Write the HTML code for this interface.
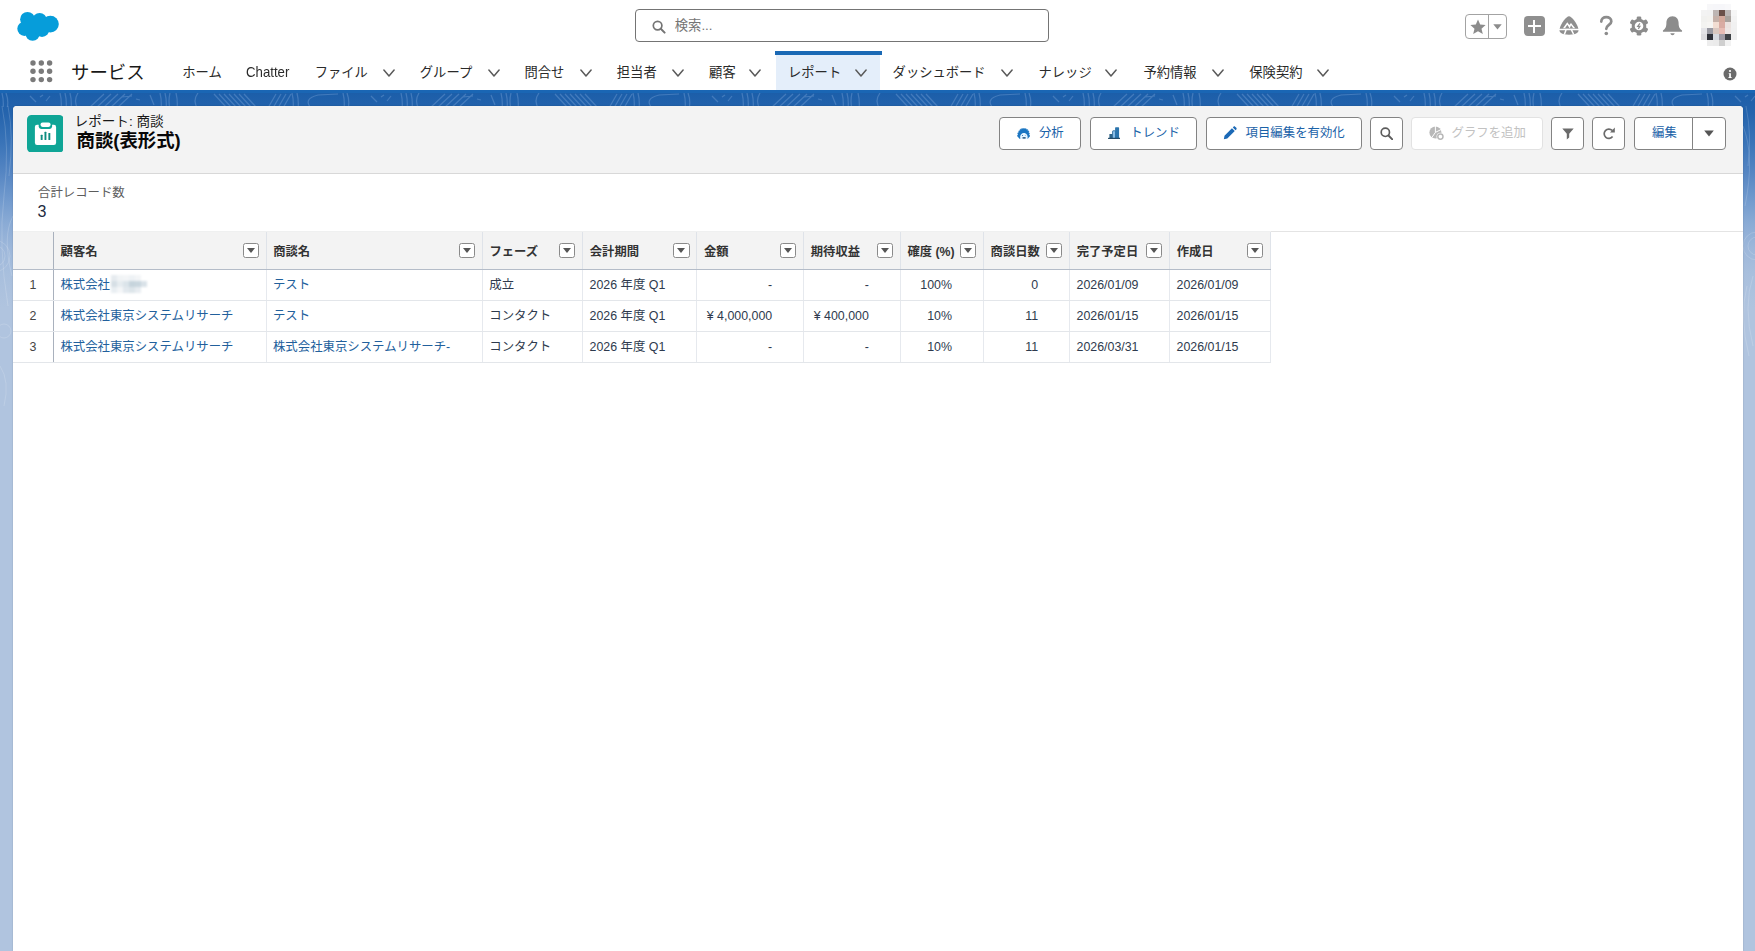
<!DOCTYPE html>
<html lang="ja">
<head>
<meta charset="utf-8">
<title>商談(表形式) | Salesforce</title>
<style>
*{box-sizing:border-box;margin:0;padding:0}
html,body{width:1755px;height:951px;overflow:hidden}
body{font-family:"Liberation Sans","Noto Sans CJK JP",sans-serif;color:#181818;background:#b0c4df;position:relative;font-size:13px}
.abs{position:absolute}
svg{display:block}
/* ---------- global header ---------- */
#ghead{position:absolute;left:0;top:0;width:1755px;height:90px;background:#fff}
#brandline{position:absolute;left:0;top:90px;width:1755px;height:3px;background:#1a66b4}
#bg{position:absolute;left:0;top:93px;width:1755px;height:300px;background:linear-gradient(to bottom,#1c5ea9 0px,#2564ad 20px,#3a74b8 50px,#5686c3 80px,#7099cd 105px,#8aabd5 130px,#9db7da 155px,#a8bfdd 180px,#b0c4df 215px)}
#search{position:absolute;left:635px;top:9px;width:414px;height:33px;border:1px solid #747474;border-radius:4px;background:#fff}
#search .ph{position:absolute;left:38.800px;top:8.2px;font-size:13.3px;color:#747474;line-height:16px}
.appname{position:absolute;left:71px;top:60px;font-size:18.4px;line-height:26px;color:#181818;white-space:nowrap}
.nav{position:absolute;top:54.6px;height:36px;font-size:13.3px;line-height:36px;color:#2a2a2a;white-space:nowrap}
.nav .chev{position:absolute;top:14px}
#active{position:absolute;left:776px;top:54px;width:104px;height:36px;background:#e4eefa}
#activebar{position:absolute;left:775px;top:51.3px;width:107px;height:3.5px;background:#1a69b5}
/* ---------- card ---------- */
#card{position:absolute;left:13px;top:106px;width:1730px;height:845px;background:#fff;border-radius:4px 4px 0 0;box-shadow:0 0 1.5px rgba(0,0,0,.25)}
#phead{position:absolute;left:0;top:0;width:1730px;height:68px;background:#f3f3f3;border-bottom:1px solid #d8d8d8;border-radius:4px 4px 0 0}
.btn{position:absolute;top:11px;height:32.5px;border:1px solid #838383;border-radius:4px;background:#fff;color:#1a62a8;font-size:12.4px;line-height:30px;white-space:nowrap}
.btn.dis{border-color:#e2e2e2;color:#c2c2c2}
.btn span{position:absolute;top:0}
/* ---------- table ---------- */
#thead{position:absolute;left:0;top:126px;width:1257.9px;height:38px;background:#f3f3f3;border-bottom:1px solid #b4bcc8;box-shadow:0 -1px 0 #eff0f0}
.th{position:absolute;top:0;height:37px;border-left:1px solid #dfe3e9;font-size:12.3px;font-weight:bold;line-height:41.2px;color:#333;white-space:nowrap;padding-left:6.6px}
.dd{position:absolute;top:10.7px;width:16.3px;height:15.6px;border:1px solid #8a8a8a;border-radius:2.5px;background:#fff}
.dd:after{content:"";position:absolute;left:3.1px;top:4.3px;border-left:4px solid transparent;border-right:4px solid transparent;border-top:5.5px solid #555}
.row{position:absolute;left:0;width:1257.9px;height:31px;border-bottom:1px solid #e3e6ea}
.td{position:absolute;top:0;height:30px;border-left:1px solid #e6e9ee;font-size:12.4px;line-height:30px;color:#2e3a4d;white-space:nowrap;padding:0 6.4px}
.td.r{text-align:right;padding-right:31px}
.td.lk{color:#22609c}
.td.n{border-left:none;text-align:center;color:#444;padding:0}
.blurname{display:inline-block;position:relative;vertical-align:top;width:36px;height:18px;margin-left:1.5px;margin-top:4.5px;filter:blur(0.8px)}
.blurname i{position:absolute;width:6px;height:6px}
</style>
</head>
<body>
<div id="ghead">
<svg class="abs" style="left:15px;top:10px" width="46" height="32" viewBox="15 10 46 32"><g fill="#069dda"><circle cx="27.5" cy="19.3" r="7.4"/><circle cx="39.6" cy="20.2" r="7.2"/><circle cx="50.4" cy="24.1" r="8.4"/><circle cx="24.4" cy="28.8" r="7.1"/><circle cx="32.6" cy="33.6" r="7.2"/><circle cx="42" cy="29.6" r="7.4"/><rect x="24" y="18" width="26" height="14"/></g></svg>
<div id="search"><svg class="abs" style="left:16.400px;top:10.200px" width="14" height="14" viewBox="0 0 14 14"><circle cx="5.6" cy="5.6" r="4.3" fill="none" stroke="#747474" stroke-width="1.7"/><path d="M8.8 8.8 L12.6 12.6" stroke="#747474" stroke-width="2" stroke-linecap="round"/></svg><div class="ph">検索...</div></div>
<!-- favorites -->
<div class="abs" style="left:1465px;top:14px;width:42px;height:24.5px;border:1px solid #a3a3a3;border-radius:4px"></div>
<div class="abs" style="left:1488px;top:14px;width:1px;height:24.5px;background:#a3a3a3"></div>
<svg class="abs" style="left:1469.5px;top:18.5px" width="16" height="16" viewBox="0 0 16 16"><path d="M8 0.6 L10.2 5.6 L15.6 6.1 L11.5 9.7 L12.8 15 L8 12.2 L3.2 15 L4.5 9.7 L0.4 6.1 L5.8 5.6 Z" fill="#8c8c8c"/></svg>
<svg class="abs" style="left:1492.6px;top:24px" width="9" height="6" viewBox="0 0 9 6"><path d="M0.3 0.3 H8.7 L4.5 5.6 Z" fill="#8c8c8c"/></svg>
<!-- plus -->
<div class="abs" style="left:1523.5px;top:16px;width:21px;height:20px;border-radius:4px;background:#8f8f8f"></div>
<div class="abs" style="left:1527.5px;top:25px;width:13px;height:2px;background:#fff"></div>
<div class="abs" style="left:1533px;top:19.5px;width:2px;height:13px;background:#fff"></div>
<!-- trailhead-like -->
<svg class="abs" style="left:1558px;top:15px" width="22" height="21" viewBox="0 0 22 21"><path d="M11 1.200 C13.500 1.200 19.300 8 20.500 14.300 C21 17 19 19.800 11 19.800 C3 19.800 1 17 1.500 14.300 C2.700 8 8.500 1.200 11 1.200 Z" fill="#8f8f8f"/><path d="M5 13.300 L9.300 7.200 L11.300 10 L13 8 L17.200 13.300 Z" fill="#fff"/><path d="M9.300 9.800 L11.600 13.300 H7 Z M13 10.200 L15.200 13.300 H11.900 Z" fill="#8f8f8f"/><path d="M1 14.400 H21 M8.200 14.400 L6.300 19.500 M13.200 14.400 L15.700 19.500" fill="none" stroke="#fff" stroke-width="1.500"/></svg>
<!-- help -->
<svg class="abs" style="left:1599px;top:15px" width="15" height="21" viewBox="0 0 15 21"><path d="M2.300 6.600 C2.300 3.700 4.500 2.200 7.300 2.200 C10.200 2.200 12.300 3.900 12.300 6.400 C12.300 9.800 7.300 9.900 7.300 13.800" fill="none" stroke="#8c8c8c" stroke-width="2.700" stroke-linecap="round"/><circle cx="7.300" cy="18.500" r="1.800" fill="#8c8c8c"/></svg>
<!-- gear -->
<svg class="abs" style="left:1629px;top:15.500px" width="20" height="20" viewBox="-10 -10 20 20"><g fill="#8c8c8c"><circle r="7.300"/><g id="tth"><rect x="-2.300" y="-9.600" width="4.600" height="4.500" rx="1.300"/></g><use href="#tth" transform="rotate(60)"/><use href="#tth" transform="rotate(120)"/><use href="#tth" transform="rotate(180)"/><use href="#tth" transform="rotate(240)"/><use href="#tth" transform="rotate(300)"/></g><circle r="4.300" fill="#fff"/><path d="M0.900 -2.600 L-1.300 0.400 H0.900 L-0.700 2.800" stroke="#8c8c8c" stroke-width="1.200" fill="none"/></svg>
<!-- bell -->
<svg class="abs" style="left:1662px;top:15px" width="21" height="21" viewBox="0 0 21 21"><path d="M10.5 1.200 C14.5 1.200 16.6 4.200 16.6 8 C16.6 12.5 18 14 19.8 15.2 C20.4 15.600 20.2 16.800 19.300 16.800 H1.700 C0.800 16.800 0.600 15.600 1.200 15.200 C3 14 4.400 12.500 4.400 8 C4.400 4.200 6.500 1.200 10.500 1.200 Z" fill="#8c8c8c"/><path d="M8.300 18.300 H12.700 C12.400 19.500 11.600 20.200 10.500 20.200 C9.400 20.200 8.600 19.500 8.300 18.300 Z" fill="#8c8c8c"/></svg>
<!-- avatar (pixelated) -->
<div class="abs" style="left:1701px;top:4px;width:36px;height:42px;filter:blur(0.5px)">
<div class="abs" style="left:6px;top:0px;width:6px;height:6px;background:#f7f7f9"></div><div class="abs" style="left:12px;top:0px;width:6px;height:6px;background:#f6f6f9"></div><div class="abs" style="left:18px;top:0px;width:6px;height:6px;background:#f6f6f9"></div><div class="abs" style="left:24px;top:0px;width:6px;height:6px;background:#f8f8fa"></div>
<div class="abs" style="left:0px;top:6px;width:6px;height:6px;background:#f3f3f3"></div><div class="abs" style="left:6px;top:6px;width:6px;height:6px;background:#f2f2f2"></div><div class="abs" style="left:12px;top:6px;width:6px;height:6px;background:#bdb5b3"></div><div class="abs" style="left:18px;top:6px;width:6px;height:6px;background:#6a5049"></div><div class="abs" style="left:24px;top:6px;width:6px;height:6px;background:#bbb6b5"></div><div class="abs" style="left:30px;top:6px;width:6px;height:6px;background:#f6f6f6"></div>
<div class="abs" style="left:0px;top:12px;width:6px;height:6px;background:#f1f1ef"></div><div class="abs" style="left:6px;top:12px;width:6px;height:6px;background:#f3f2ef"></div><div class="abs" style="left:12px;top:12px;width:6px;height:6px;background:#c5b1a9"></div><div class="abs" style="left:18px;top:12px;width:6px;height:6px;background:#d4a99c"></div><div class="abs" style="left:24px;top:12px;width:6px;height:6px;background:#a9a39e"></div><div class="abs" style="left:30px;top:12px;width:6px;height:6px;background:#f3f3f3"></div>
<div class="abs" style="left:0px;top:18px;width:6px;height:6px;background:#f3f3f1"></div><div class="abs" style="left:6px;top:18px;width:6px;height:6px;background:#f6f5f3"></div><div class="abs" style="left:12px;top:18px;width:6px;height:6px;background:#f2ddd2"></div><div class="abs" style="left:18px;top:18px;width:6px;height:6px;background:#d9aca3"></div><div class="abs" style="left:24px;top:18px;width:6px;height:6px;background:#ebe2df"></div><div class="abs" style="left:30px;top:18px;width:6px;height:6px;background:#f1f1f1"></div>
<div class="abs" style="left:0px;top:24px;width:6px;height:6px;background:#e4e4e8"></div><div class="abs" style="left:6px;top:24px;width:6px;height:6px;background:#9a9aa3"></div><div class="abs" style="left:12px;top:24px;width:6px;height:6px;background:#d9c8c1"></div><div class="abs" style="left:18px;top:24px;width:6px;height:6px;background:#e8bdb5"></div><div class="abs" style="left:24px;top:24px;width:6px;height:6px;background:#ece5e3"></div><div class="abs" style="left:30px;top:24px;width:6px;height:6px;background:#f0f0f0"></div>
<div class="abs" style="left:0px;top:30px;width:6px;height:6px;background:#dcdce0"></div><div class="abs" style="left:6px;top:30px;width:6px;height:6px;background:#2e3039"></div><div class="abs" style="left:12px;top:30px;width:6px;height:6px;background:#d6d9e0"></div><div class="abs" style="left:18px;top:30px;width:6px;height:6px;background:#a09ca5"></div><div class="abs" style="left:24px;top:30px;width:6px;height:6px;background:#3e4246"></div><div class="abs" style="left:30px;top:30px;width:6px;height:6px;background:#efefef"></div>
<div class="abs" style="left:6px;top:36px;width:6px;height:6px;background:#ededed"></div><div class="abs" style="left:12px;top:36px;width:6px;height:6px;background:#ebebeb"></div><div class="abs" style="left:18px;top:36px;width:6px;height:6px;background:#cfcfcf"></div><div class="abs" style="left:24px;top:36px;width:6px;height:6px;background:#f2f2f2"></div>
</div>
<!-- info -->
<svg class="abs" style="left:1723px;top:66.5px" width="14" height="14" viewBox="0 0 14 14"><circle cx="7" cy="7" r="6.500" fill="#6b6b6b"/><circle cx="7" cy="4" r="1.100" fill="#fff"/><path d="M5.700 6.200 H7.900 V10 H8.600 V10.900 H5.500 V10 H6.200 V7.100 H5.700 Z" fill="#fff"/></svg>
<!-- waffle -->
<svg class="abs" style="left:30px;top:59.500px" width="23" height="23" viewBox="0 0 23 23"><g fill="#7a7a7a"><circle cx="3" cy="3" r="2.700"/><circle cx="11.300" cy="3" r="2.700"/><circle cx="19.600" cy="3" r="2.700"/><circle cx="3" cy="11.300" r="2.700"/><circle cx="11.300" cy="11.300" r="2.700"/><circle cx="19.600" cy="11.300" r="2.700"/><circle cx="3" cy="19.600" r="2.700"/><circle cx="11.300" cy="19.600" r="2.700"/><circle cx="19.600" cy="19.600" r="2.700"/></g></svg>
<div class="appname">サービス</div>
<div id="active"></div><div id="activebar"></div>
<div class="nav" style="left:182.3px">ホーム</div>
<div class="nav" style="left:246.3px;font-size:14.3px;top:53.8px;transform:scaleX(.925);transform-origin:left center">Chatter</div>
<div class="nav" style="left:314.7px">ファイル</div>
<svg class="abs" style="left:383px;top:69px" width="12" height="8" viewBox="0 0 12 8"><path d="M0.9 1 L6 7 L11.1 1" fill="none" stroke="#5a5a5a" stroke-width="1.5" stroke-linecap="round" stroke-linejoin="round"/></svg>
<div class="nav" style="left:419.8px">グループ</div>
<svg class="abs" style="left:488px;top:69px" width="12" height="8" viewBox="0 0 12 8"><path d="M0.9 1 L6 7 L11.1 1" fill="none" stroke="#5a5a5a" stroke-width="1.5" stroke-linecap="round" stroke-linejoin="round"/></svg>
<div class="nav" style="left:524.4px">問合せ</div>
<svg class="abs" style="left:579.7px;top:69px" width="12" height="8" viewBox="0 0 12 8"><path d="M0.9 1 L6 7 L11.1 1" fill="none" stroke="#5a5a5a" stroke-width="1.5" stroke-linecap="round" stroke-linejoin="round"/></svg>
<div class="nav" style="left:616.8px">担当者</div>
<svg class="abs" style="left:671.7px;top:69px" width="12" height="8" viewBox="0 0 12 8"><path d="M0.9 1 L6 7 L11.1 1" fill="none" stroke="#5a5a5a" stroke-width="1.5" stroke-linecap="round" stroke-linejoin="round"/></svg>
<div class="nav" style="left:709.1px">顧客</div>
<svg class="abs" style="left:749.4px;top:69px" width="12" height="8" viewBox="0 0 12 8"><path d="M0.9 1 L6 7 L11.1 1" fill="none" stroke="#5a5a5a" stroke-width="1.5" stroke-linecap="round" stroke-linejoin="round"/></svg>
<div class="nav" style="left:788px">レポート</div>
<svg class="abs" style="left:854.7px;top:69px" width="12" height="8" viewBox="0 0 12 8"><path d="M0.9 1 L6 7 L11.1 1" fill="none" stroke="#5a5a5a" stroke-width="1.5" stroke-linecap="round" stroke-linejoin="round"/></svg>
<div class="nav" style="left:892.6px">ダッシュボード</div>
<svg class="abs" style="left:1001px;top:69px" width="12" height="8" viewBox="0 0 12 8"><path d="M0.9 1 L6 7 L11.1 1" fill="none" stroke="#5a5a5a" stroke-width="1.5" stroke-linecap="round" stroke-linejoin="round"/></svg>
<div class="nav" style="left:1038.5px">ナレッジ</div>
<svg class="abs" style="left:1105px;top:69px" width="12" height="8" viewBox="0 0 12 8"><path d="M0.9 1 L6 7 L11.1 1" fill="none" stroke="#5a5a5a" stroke-width="1.5" stroke-linecap="round" stroke-linejoin="round"/></svg>
<div class="nav" style="left:1143.4px">予約情報</div>
<svg class="abs" style="left:1211.5px;top:69px" width="12" height="8" viewBox="0 0 12 8"><path d="M0.9 1 L6 7 L11.1 1" fill="none" stroke="#5a5a5a" stroke-width="1.5" stroke-linecap="round" stroke-linejoin="round"/></svg>
<div class="nav" style="left:1249.3px">保険契約</div>
<svg class="abs" style="left:1317px;top:69px" width="12" height="8" viewBox="0 0 12 8"><path d="M0.9 1 L6 7 L11.1 1" fill="none" stroke="#5a5a5a" stroke-width="1.5" stroke-linecap="round" stroke-linejoin="round"/></svg>
</div>
<div id="brandline"></div>
<div id="bg"></div>
<svg class="abs" style="left:0;top:93px" width="1755" height="16" viewBox="0 0 1755 16"><defs><pattern id="swirl" width="341" height="16" patternUnits="userSpaceOnUse"><path d="M2 0 Q4 8 3 16 M6 0 Q9 8 7 16 M30 3 L36 9 M40 4 L43 2 M46 8 L50 3 M60 0 Q62 8 61 16 M65 0 Q67 8 66 16 M70 0 Q72 8 71 16 M78 0 Q73 8 78 16 M88 16 L104 1 M95 16 L111 1 M102 16 L118 1 M109 16 L125 1 M116 16 L132 1 M122 4 L132 3 M136 6 L140 7 M150 2 L154 12 M160 0 Q162 8 161 16 M165 0 Q167 8 166 16 M170 0 Q168 8 170 16 M176 0 Q178 8 177 16 M198 0 Q192 8 198 16 M214 1 L226 14 M219 1 L231 14 M224 1 L236 14 M229 1 L241 14 M234 1 L246 14 M239 1 L251 14 M244 1 L256 14 M268 15 L276 1 M273 15 L281 1 M278 15 L286 1 M283 15 L291 1 M292 0 Q294 8 293 16 M297 0 Q299 8 298 16 M312 16 Q302 6 318 2 M318 2 L338 1" fill="none" stroke="#8fb6e4" stroke-opacity="0.32" stroke-width="1.2"/></pattern></defs><rect width="1755" height="14" fill="url(#swirl)"/></svg>
<svg class="abs" style="left:0;top:106px" width="13" height="330" viewBox="0 0 13 330"><g fill="none" stroke="#fff" stroke-opacity="0.16" stroke-width="1"><path d="M2 0 Q10 40 4 90 T8 200"/><path d="M8 0 Q14 30 9 70"/><circle cx="-6" cy="150" r="16"/><circle cx="-6" cy="150" r="11"/><path d="M13 110 Q2 130 12 170"/><circle cx="4" cy="225" r="7"/><path d="M0 260 Q10 275 4 300"/></g></svg>
<svg class="abs" style="left:1743px;top:106px" width="12" height="330" viewBox="0 0 12 330"><g fill="none" stroke="#fff" stroke-opacity="0.16" stroke-width="1"><path d="M3 0 Q9 30 5 60"/><path d="M0 20 Q12 50 2 100"/><circle cx="14" cy="140" r="14"/><circle cx="14" cy="140" r="9"/><path d="M10 170 Q0 200 10 240"/><path d="M4 180 Q-4 210 6 250"/></g></svg>
<div id="card">
  <div id="phead">
<svg class="abs" style="left:13.7px;top:8.9px" width="36.8" height="37.6" viewBox="0 0 36.8 37.6"><rect width="36.8" height="37.6" rx="4.6" fill="#0fa596"/><rect x="7.9" y="9.7" width="21.2" height="20.2" rx="2.2" fill="#fff"/><path d="M11.7 8.5 H25.1 V11.200 C25.1 12.700 23.900 13.900 22.400 13.900 H14.400 C12.900 13.900 11.700 12.700 11.700 11.200 Z" fill="#0fa596"/><rect x="13.500" y="7.400" width="10.100" height="4.500" rx="2.100" fill="#fff"/><g fill="#0d8c80"><rect x="13.700" y="19.800" width="1.900" height="5.200" rx="0.500"/><rect x="17.500" y="16.800" width="1.900" height="8.200" rx="0.500"/><rect x="21.400" y="18.100" width="1.900" height="6.900" rx="0.500"/></g></svg>
<div class="abs" style="left:61.600px;top:7px;font-size:13.600px;line-height:17px;color:#181818;white-space:nowrap">レポート: 商談</div>
<div class="abs" style="left:63.5px;top:22px;font-size:18.400px;font-weight:bold;line-height:25px;color:#080707;white-space:nowrap">商談(表形式)</div>

<div class="btn" style="left:986.3px;width:82px"><svg class="abs" style="left:16.500px;top:9.800px" width="13.2" height="11.1" viewBox="0 0 13.2 11.1"><path d="M2.700 10.800 L0.100 7.800 L1.100 6.600 L0.600 5 L1.900 4.200 L1.700 2.900 L3.100 2.500 L3.100 1.200 L4.400 1.300 L4.900 0.200 L6 0.900 L7 0.100 L7.900 0.900 L9 0.400 L9.500 1.500 L10.700 1.500 L10.700 2.800 L12 3.100 L11.600 4.400 L12.600 5.300 L12 6.500 L13.100 7.800 L10.600 10.800 Z" fill="#1c76c2" stroke="#1c76c2" stroke-width="0.400" stroke-linejoin="round"/><path d="M3.300 10.900 C2.600 7.300 4.300 4.900 6.900 4.900 C9.500 4.900 11.200 7.300 10.500 10.900 Z" fill="#e6f5ff"/><ellipse cx="7.100" cy="9.900" rx="1.900" ry="0.800" fill="#2f5f8a"/><circle cx="5.500" cy="7.500" r="0.600" fill="#2a6ca8"/><circle cx="8.300" cy="7.500" r="0.500" fill="#7fb4e0"/></svg><span style="left:38.700px">分析</span></div>
<div class="btn" style="left:1077.3px;width:106.500px"><svg class="abs" style="left:16.600px;top:9px" width="12.2" height="12" viewBox="0 0 12.2 12"><rect x="1.400" y="7.100" width="3.400" height="4.500" rx="0.500" fill="#2d6388"/><rect x="4.600" y="3.800" width="2.800" height="7.800" rx="0.500" fill="#93c6ee" stroke="#2d6a9b" stroke-width="0.900"/><rect x="7.100" y="0.200" width="4" height="11.400" rx="0.700" fill="#2a74ad"/><rect x="0" y="10.800" width="12.200" height="1.200" rx="0.500" fill="#234c6b"/></svg><span style="left:39px">トレンド</span></div>
<div class="btn" style="left:1192.6px;width:156px"><svg class="abs" style="left:16.500px;top:8.200px" width="14" height="14" viewBox="0 0 15 15"><path d="M1.600 10.400 L9.600 2.400 L12.600 5.400 L4.600 13.400 L0.900 14.200 Z M10.500 1.500 L11.300 0.700 C11.800 0.200 12.500 0.200 13 0.700 L14.300 2 C14.800 2.500 14.800 3.200 14.300 3.700 L13.500 4.500 Z" fill="#1b69b6"/></svg><span style="left:39px">項目編集を有効化</span></div>
<div class="btn" style="left:1357.4px;width:32.400px"><svg class="abs" style="left:8.300px;top:8.600px" width="13.8" height="13.8" viewBox="0 0 15 15"><circle cx="5.800" cy="5.800" r="4.500" fill="none" stroke="#5c5c5c" stroke-width="1.800"/><path d="M9.200 9.200 L13.600 13.600" stroke="#5c5c5c" stroke-width="2.100" stroke-linecap="round"/></svg></div>
<div class="btn dis" style="left:1398px;width:131.500px"><svg class="abs" style="left:17px;top:7.900px" width="16" height="15" viewBox="0 0 16 15"><circle cx="6.400" cy="6.400" r="6" fill="#b8b8b8"/><path d="M6.400 6.400 V0 M6.400 6.400 L12 3.600 M6.400 6.400 L2.800 11.600" stroke="#fff" stroke-width="1"/><circle cx="11.400" cy="10.600" r="3.900" fill="#fff"/><circle cx="11.400" cy="10.600" r="2.600" fill="none" stroke="#b8b8b8" stroke-width="1.500"/></svg><span style="left:39.500px">グラフを追加</span></div>
<div class="btn" style="left:1538.4px;width:32.200px"><svg class="abs" style="left:9.300px;top:10px" width="12" height="12" viewBox="0 0 12 12"><path d="M0.300 0.500 H11.700 L7.200 5.800 V9.600 L4.800 11.500 V5.800 Z" fill="#6b6b6b"/></svg></div>
<div class="btn" style="left:1579.3px;width:32.600px"><svg class="abs" style="left:9.200px;top:9.200px" width="14" height="13" viewBox="0 0 14 13"><path d="M10.600 9.600 A4.700 4.700 0 1 1 10.200 3.400" fill="none" stroke="#6b6b6b" stroke-width="1.700"/><path d="M12.800 0.600 V5.400 H8 Z" fill="#6b6b6b"/></svg></div>
<div class="btn" style="left:1621px;width:59px;border-radius:4px 0 0 4px"><span style="left:17px">編集</span></div>
<div class="btn" style="left:1679px;width:33.900px;border-radius:0 4px 4px 0"><svg class="abs" style="left:10.800px;top:11.900px" width="10" height="7" viewBox="0 0 10 7"><path d="M0.200 0.400 H9.800 L5 6.400 Z" fill="#555"/></svg></div>
</div>
<div class="abs" style="left:25px;top:78.5px;font-size:12.400px;line-height:17px;color:#5c5c5c;white-space:nowrap">合計レコード数</div>
<div class="abs" style="left:24.5px;top:95.5px;font-size:16px;line-height:20px;color:#1d2a40;white-space:nowrap">3</div>
<div class="abs" style="left:0;top:125px;width:1730px;height:1px;background:#e4e4e4"></div>
<div id="thead" style="top:126px">
<div class="th" style="left:40px;width:212.6px;border-left-color:#a9b1bd">顧客名<div class="dd" style="left:188.6px"></div></div>
<div class="th" style="left:252.6px;width:216.3px">商談名<div class="dd" style="left:192.3px"></div></div>
<div class="th" style="left:468.9px;width:100.3px">フェーズ<div class="dd" style="left:76.3px"></div></div>
<div class="th" style="left:569.2px;width:114.2px">会計期間<div class="dd" style="left:90.2px"></div></div>
<div class="th" style="left:683.4px;width:106.8px">金額<div class="dd" style="left:82.8px"></div></div>
<div class="th" style="left:790.2px;width:96.7px">期待収益<div class="dd" style="left:72.7px"></div></div>
<div class="th" style="left:886.9px;width:83.1px">確度 (%)<div class="dd" style="left:59.1px"></div></div>
<div class="th" style="left:970px;width:86.1px">商談日数<div class="dd" style="left:62.1px"></div></div>
<div class="th" style="left:1056.1px;width:100.0px">完了予定日<div class="dd" style="left:76.0px"></div></div>
<div class="th" style="left:1156.1px;width:100.8px">作成日<div class="dd" style="left:76.8px"></div></div>
<div class="abs" style="left:1256.9px;top:0;width:1px;height:37px;background:#dfe3e9"></div>
</div>
<div class="row" style="top:164px">
<div class="td n" style="left:0;width:40px">1</div>
<div class="td lk" style="left:40px;width:212.6px;border-left-color:#a9b1bd">株式会社<span class="blurname"><i style="left:0px;top:0px;background:#e6ebef"></i><i style="left:6px;top:0px;background:#f1f4f6"></i><i style="left:12px;top:0px;background:#f3f5f7"></i><i style="left:18px;top:0px;background:#eef2f5"></i><i style="left:24px;top:0px;background:#f3f5f7"></i><i style="left:0px;top:6px;background:#d6dfe5"></i><i style="left:6px;top:6px;background:#e6ecf0"></i><i style="left:12px;top:6px;background:#dbe4ea"></i><i style="left:18px;top:6px;background:#c6d4dc"></i><i style="left:24px;top:6px;background:#c9d6de"></i><i style="left:30px;top:6px;background:#d9e2e8"></i><i style="left:0px;top:12px;background:#e9eef2"></i><i style="left:6px;top:12px;background:#f4f6f8"></i><i style="left:12px;top:12px;background:#e3e9ee"></i><i style="left:18px;top:12px;background:#dde5ea"></i><i style="left:24px;top:12px;background:#e8edf1"></i></span></div>
<div class="td lk" style="left:252.6px;width:216.3px">テスト</div>
<div class="td" style="left:468.9px;width:100.3px">成立</div>
<div class="td" style="left:569.2px;width:114.2px">2026 年度 Q1</div>
<div class="td r" style="left:683.4px;width:106.8px">-</div>
<div class="td r" style="left:790.2px;width:96.7px">-</div>
<div class="td r" style="left:886.9px;width:83.1px">100%</div>
<div class="td r" style="left:970px;width:86.1px">0</div>
<div class="td" style="left:1056.1px;width:100.0px">2026/01/09</div>
<div class="td" style="left:1156.1px;width:100.8px">2026/01/09</div>
<div class="abs" style="left:1256.9px;top:0;width:1px;height:30px;background:#e6e9ee"></div>
</div>
<div class="row" style="top:195px">
<div class="td n" style="left:0;width:40px">2</div>
<div class="td lk" style="left:40px;width:212.6px;border-left-color:#a9b1bd">株式会社東京システムリサーチ</div>
<div class="td lk" style="left:252.6px;width:216.3px">テスト</div>
<div class="td" style="left:468.9px;width:100.3px">コンタクト</div>
<div class="td" style="left:569.2px;width:114.2px">2026 年度 Q1</div>
<div class="td r" style="left:683.4px;width:106.8px">¥ 4,000,000</div>
<div class="td r" style="left:790.2px;width:96.7px">¥ 400,000</div>
<div class="td r" style="left:886.9px;width:83.1px">10%</div>
<div class="td r" style="left:970px;width:86.1px">11</div>
<div class="td" style="left:1056.1px;width:100.0px">2026/01/15</div>
<div class="td" style="left:1156.1px;width:100.8px">2026/01/15</div>
<div class="abs" style="left:1256.9px;top:0;width:1px;height:30px;background:#e6e9ee"></div>
</div>
<div class="row" style="top:226px">
<div class="td n" style="left:0;width:40px">3</div>
<div class="td lk" style="left:40px;width:212.6px;border-left-color:#a9b1bd">株式会社東京システムリサーチ</div>
<div class="td lk" style="left:252.6px;width:216.3px">株式会社東京システムリサーチ-</div>
<div class="td" style="left:468.9px;width:100.3px">コンタクト</div>
<div class="td" style="left:569.2px;width:114.2px">2026 年度 Q1</div>
<div class="td r" style="left:683.4px;width:106.8px">-</div>
<div class="td r" style="left:790.2px;width:96.7px">-</div>
<div class="td r" style="left:886.9px;width:83.1px">10%</div>
<div class="td r" style="left:970px;width:86.1px">11</div>
<div class="td" style="left:1056.1px;width:100.0px">2026/03/31</div>
<div class="td" style="left:1156.1px;width:100.8px">2026/01/15</div>
<div class="abs" style="left:1256.9px;top:0;width:1px;height:30px;background:#e6e9ee"></div>
</div>
</div>
</body>
</html>
